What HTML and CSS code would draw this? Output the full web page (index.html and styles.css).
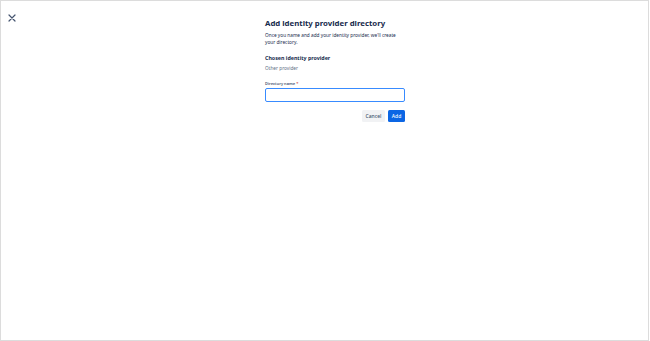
FILE: index.html
```html
<!DOCTYPE html>
<html lang="en">
<head>
    <meta charset="UTF-8">
    <meta name="viewport" content="width=device-width, initial-scale=1.0">
    <title>Add identity provider directory</title>
    <link rel="stylesheet" href="styles.css">
</head>
<body>
    <div class="frame">
        <!-- Close -->
        <button class="close" aria-label="Close">
            <svg width="8" height="8" viewBox="0 0 8 8">
                <path d="M1 1 L7 7 M7 1 L1 7" stroke="#44546f" stroke-width="1.2" stroke-linecap="round"/>
            </svg>
        </button>

        <!-- Form -->
        <div class="panel">
            <h1>Add identity provider directory</h1>
            <p class="desc">Once you name and add your identity provider, we'll create your directory.</p>

            <h2>Chosen identity provider</h2>
            <p class="muted">Other provider</p>

            <div class="form-group">
                <label>Directory name<span class="req">*</span></label>
                <input type="text" class="field">
            </div>

            <div class="actions">
                <button class="btn btn-subtle">Cancel</button>
                <button class="btn btn-primary">Add</button>
            </div>
        </div>
    </div>
</body>
</html>
```

FILE: styles.css
```css
* {
    margin: 0;
    padding: 0;
    box-sizing: border-box;
}

body {
    font-family: 'Noto Sans', 'Liberation Sans', sans-serif;
    background: #fff;
    color: #172b4d;
}

.frame {
    width: 649px;
    height: 341px;
    border: 1px solid #dcdcdc;
    display: flex;
    align-items: flex-start;
}

.close {
    background: none;
    border: none;
    width: 8px;
    height: 8px;
    margin: 13px 0 0 7px;
    display: flex;
}

.panel {
    width: 140px;
    margin-left: 249px;
    padding-top: 17px;
}

h1 {
    font-size: 7.8px;
    font-weight: 700;
    line-height: 11px;
    color: #172b4d;
    white-space: nowrap;
}

.desc {
    font-size: 4.75px;
    line-height: 7px;
    margin-top: 3px;
    color: #172b4d;
}

h2 {
    font-size: 5.3px;
    font-weight: 700;
    line-height: 8px;
    margin-top: 8px;
}

.muted {
    font-size: 4.75px;
    line-height: 7px;
    margin-top: 3px;
    color: #626f86;
}

.form-group {
    margin-top: 9px;
}

.form-group label {
    display: block;
    font-size: 4px;
    font-weight: 600;
    line-height: 6px;
    color: #44546f;
    margin-bottom: 1px;
}

.req {
    color: #c9372c;
    margin-left: 1px;
}

.field {
    display: block;
    width: 100%;
    height: 14px;
    border: 1.5px solid #388bff;
    border-radius: 2px;
    outline: none;
}

.actions {
    display: flex;
    justify-content: flex-end;
    gap: 3px;
    margin-top: 8px;
}

.btn {
    border: none;
    border-radius: 1.5px;
    height: 12px;
    font-family: inherit;
    font-size: 5px;
    font-weight: 500;
    line-height: 12px;
}

.btn-subtle {
    background: #f1f2f4;
    color: #44546f;
    width: 23px;
}

.btn-primary {
    background: #0c66e4;
    color: #fff;
    width: 17px;
}
```
